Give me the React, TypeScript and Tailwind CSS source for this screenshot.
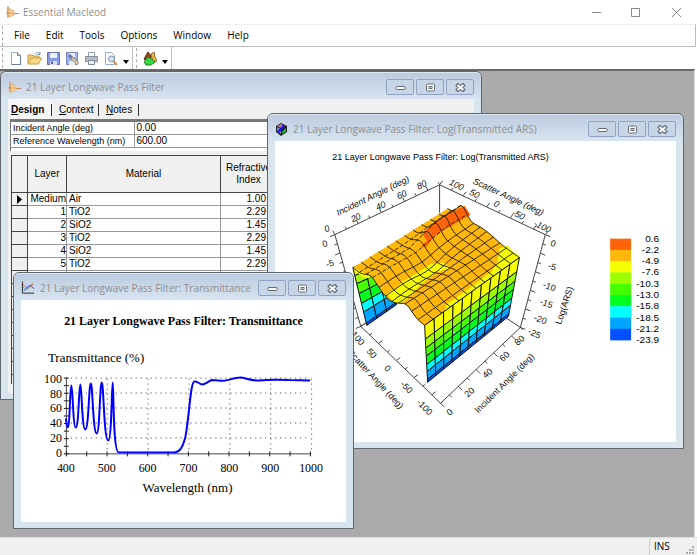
import { ReactNode } from "react";

type Point = [number, number];

const MENU = ["File", "Edit", "Tools", "Options", "Window", "Help"];

const LAYERS = [
  { layer: "Medium", material: "Air", index: "1.00" },
  ...Array.from({ length: 5 }, (_, i) => ({
    layer: String(i + 1),
    material: i % 2 === 0 ? "TiO2" : "SiO2",
    index: i % 2 === 0 ? "2.29" : "1.45",
  })),
  ...Array.from({ length: 9 }, () => ({ layer: "", material: "", index: "" })),
];

const BANDS = [
  "#ff640a",
  "#ffb70b",
  "#f6ff00",
  "#9dff00",
  "#46ff00",
  "#00ff1e",
  "#00ffff",
  "#00a5ff",
  "#0050ff",
];

const LEVELS = [
  "0.6",
  "-2.2",
  "-4.9",
  "-7.6",
  "-10.3",
  "-13.0",
  "-15.8",
  "-18.5",
  "-21.2",
  "-23.9",
];

const lerp = (a: Point, b: Point, t: number): Point => [
  a[0] + (b[0] - a[0]) * t,
  a[1] + (b[1] - a[1]) * t,
];

const toPoints = (points: Point[]) =>
  points.map((p) => `${p[0].toFixed(1)},${p[1].toFixed(1)}`).join(" ");

function AppIcon() {
  return (
    <svg className="shrink-0" width="13" height="14" viewBox="0 0 13 14" fill="none">
      <path d="M2 1.500v11" stroke="#d8a56e" strokeWidth="2" />
      <path d="M1 2l6 4M1 12l7-3" stroke="#e8b47c" />
      <path d="M3 4l5 2v4l-5 2z" fill="#ffd9a0" stroke="#e0ae78" />
      <path d="M8 8.500h5M0 8h3M4 8h3" stroke="#c98d55" />
    </svg>
  );
}

function CubeIcon() {
  return (
    <svg className="shrink-0" width="13" height="13" viewBox="0 0 13 13">
      <path d="M6 0l6 3v6l-6 4-5-4V3z" fill="#222" />
      <path d="M6 1l4 2-4 2-4-2z" fill="#b87aa0" />
      <path d="M2 4l4 2v5L2 8z" fill="#8a8a8a" />
      <path d="M3 9l3-3 3-4" stroke="#1010ff" strokeWidth="2" fill="none" />
      <path d="M7 9l4-4v3L8 11z" fill="#16d030" />
    </svg>
  );
}

function PlotIcon() {
  return (
    <svg className="shrink-0" width="14" height="14" viewBox="0 0 15 14" fill="none">
      <path d="M1.500 0v12.500H14" stroke="#222" />
      <path d="M2 3l3 3 3 1 5-4" stroke="#e02020" strokeDasharray="2 1" />
      <path d="M3 10l4-4 3-2 4 4" stroke="#3030ff" />
      <path d="M2 6l4 3 4-4 3-4" stroke="#20c840" strokeDasharray="2 1" />
    </svg>
  );
}

function MinGlyph() {
  return (
    <svg width="11" height="9" viewBox="0 0 11 9">
      <rect x="1" y="3.500" width="9" height="3" rx="1" fill="#fff" stroke="#676b78" />
    </svg>
  );
}

function MaxGlyph() {
  return (
    <svg width="11" height="9" viewBox="0 0 11 9">
      <rect x="1.500" y="1" width="8" height="7" rx="1" fill="#fff" stroke="#676b78" />
      <rect x="4" y="3.500" width="3" height="2" fill="#b8c9dd" stroke="#676b78" />
    </svg>
  );
}

function CloseGlyph() {
  return (
    <svg width="11" height="9" viewBox="0 0 11 9">
      <path d="M1.500 1l8 7M9.500 1l-8 7" stroke="#676b78" strokeWidth="4" />
      <path d="M2.500 2l6 5M8.500 2l-6 5" stroke="#fff" strokeWidth="2" />
    </svg>
  );
}

type WindowProps = {
  title: string;
  icon: ReactNode;
  className: string;
  children: ReactNode;
};

function ChildWindow({ title, icon, className, children }: WindowProps) {
  const buttons = [
    { label: "Minimize", glyph: <MinGlyph /> },
    { label: "Restore", glyph: <MaxGlyph /> },
    { label: "Close", glyph: <CloseGlyph /> },
  ];
  return (
    <section
      className={`absolute flex flex-col rounded-t-md border border-[#60666d] bg-[#d7e5ef] px-[7px] pb-[6px] ${className}`}
    >
      <header className="-mx-[7px] flex h-[27px] shrink-0 items-center rounded-t-md border-t border-[#dce8f4] bg-linear-to-b from-[#bccbdf] to-[#d7e5f1] pt-0.5 pr-[7px] pl-[7px]">
        {icon}
        <h2 className="ml-[5px] grow text-[10px] whitespace-nowrap text-[#8e8e8e]">
          {title}
        </h2>
        <div className="flex gap-0.5">
          {buttons.map((b) => (
            <button
              key={b.label}
              aria-label={b.label}
              className="flex h-4 w-7 items-center justify-center rounded-xs border border-[#91a2c4] bg-[#c6d6e7]"
            >
              {b.glyph}
            </button>
          ))}
        </div>
      </header>
      <div className="min-h-0 grow overflow-hidden">{children}</div>
    </section>
  );
}

function Tab({ label, className }: { label: string; className: string }) {
  return (
    <button
      role="tab"
      aria-selected={label === "Design"}
      className={`h-5 rounded-tl-sm rounded-tr-md border-t border-white text-left ${className}`}
    >
      <span className="flex items-center justify-between">
        <span>
          <u>{label[0]}</u>
          {label.slice(1)}
        </span>
        <span className="h-3 w-px bg-[#333]" />
      </span>
    </button>
  );
}

function DesignTable() {
  return (
    <div className="flex h-full flex-col bg-[#f0f0f0] font-['Liberation_Sans',sans-serif] text-[10px] leading-3 text-black">
      <div role="tablist" className="flex shrink-0 gap-1">
        <Tab label="Design" className="w-11 bg-[#f5f5f5] pl-[3px] font-bold" />
        <Tab label="Context" className="w-[43px] pl-[3px]" />
        <Tab label="Notes" className="w-9 pl-[3px]" />
      </div>
      <div className="ml-0.5 h-8 shrink-0 overflow-hidden border-t border-l border-[#777] bg-white">
        <table className="w-full table-fixed border-collapse border-t-2 border-[#777]">
          <tbody>
            <tr className="h-[13px] border-b border-[#999]">
              <th className="w-[123px] border-r border-[#999] p-0 pl-0.5 text-left text-[9px] font-normal whitespace-nowrap">
                Incident Angle (deg)
              </th>
              <td className="p-0 pl-0.5">0.00</td>
            </tr>
            <tr className="h-[13px] border-b border-[#999]">
              <th className="border-r border-[#999] p-0 pl-0.5 text-left text-[9px] font-normal whitespace-nowrap">
                Reference Wavelength (nm)
              </th>
              <td className="p-0 pl-0.5">600.00</td>
            </tr>
          </tbody>
        </table>
      </div>
      <div className="mt-1 mb-2 ml-[3px] min-h-0 grow overflow-hidden border-b border-white">
        <table className="w-full table-fixed border-collapse border border-[#444] bg-white">
          <thead>
            <tr className="h-[37px] bg-[#f0f0f0]">
              <th className="w-4 border border-[#444]" />
              <th className="w-[39px] border border-[#444] font-normal">Layer</th>
              <th className="w-[154px] border border-[#444] font-normal">Material</th>
              <th className="w-14 border border-[#444] font-normal">
                Refractive Index
              </th>
              <th className="border border-[#444]" />
            </tr>
          </thead>
          <tbody>
            {LAYERS.map((row, i) => (
              <tr key={i} className="h-[13px] border-b border-[#999]">
                <td className="border border-[#444] bg-[#f0f0f0] p-0">
                  {i === 0 && (
                    <svg className="mx-auto" width="5" height="9" viewBox="0 0 5 9">
                      <path d="M0 0l5 4.500L0 9z" />
                    </svg>
                  )}
                </td>
                <td className="border-r border-[#999] p-0 text-right">{row.layer}</td>
                <td className="border-r border-[#999] py-0 pl-0.5">{row.material}</td>
                <td className="border-r border-[#999] py-0 pr-2.5 text-right">
                  {row.index}
                </td>
                <td />
              </tr>
            ))}
          </tbody>
        </table>
      </div>
    </div>
  );
}

// Height offset of the scatter surface, u runs along incident angle and v along scatter angle.
function lift(u: number, v: number) {
  const hump = (c: number, w: number) => Math.exp(-((v - c) ** 2) / w);
  const near = 1 - u;
  return (
    near * (6 * hump(0.25, 0.01) - 3 * hump(0.5, 0.01) + 6 * hump(0.75, 0.01)) +
    12 * hump(0.2, 0.008) * Math.max(0, Math.min(1, (u - 0.45) * 3)) +
    u * 4 * hump(0.5, 0.05) -
    5 * hump(0.45, 0.02) * Math.exp(-((u - 0.45) ** 2) / 0.03)
  );
}

const LEFT: Point = [353, 267];
const BACK: Point = [448, 208];
const FRONT: Point = [425, 325];
const RIGHT: Point = [520, 257];

function surface(u: number, v: number): Point {
  const [x, y] = lerp(lerp(LEFT, BACK, u), lerp(FRONT, RIGHT, u), v);
  return [x, y - lift(u, v)];
}

function Wall(props: {
  top: [Point, Point];
  bottom: [Point, Point];
  columns: number;
  stops: number[];
}) {
  const { top, bottom, columns, stops } = props;
  const colors = BANDS.slice(2);
  const at = (c: number, s: number) =>
    lerp(lerp(top[0], top[1], c / columns), lerp(bottom[0], bottom[1], c / columns), s);
  return (
    <g stroke="#111" strokeWidth="1">
      {Array.from({ length: columns }, (_, c) =>
        colors.map((color, i) => (
          <polygon
            key={`${c}-${i}`}
            fill={color}
            points={toPoints([
              at(c, stops[i]),
              at(c + 1, stops[i]),
              at(c + 1, stops[i + 1]),
              at(c, stops[i + 1]),
            ])}
          />
        ))
      )}
    </g>
  );
}

function Axis(props: { from: Point; to: Point; tick: Point; count: number }) {
  const { from, to, tick, count } = props;
  return (
    <g stroke="#444">
      <line x1={from[0]} y1={from[1]} x2={to[0]} y2={to[1]} />
      {Array.from({ length: count + 1 }, (_, i) => {
        const [x, y] = lerp(from, to, i / count);
        const k = i % 2 === 0 ? 1 : 0.6;
        return <line key={i} x1={x} y1={y} x2={x + tick[0] * k} y2={y + tick[1] * k} />;
      })}
    </g>
  );
}

const AXIS_LABELS: [string, number, number, number][] = [
  ["Incident Angle (deg)", 373, 195, -26],
  ["80", 422, 184, -26],
  ["60", 402, 194, -26],
  ["40", 381, 205, -26],
  ["20", 356, 217, -26],
  ["0", 327, 228, -26],
  ["0", 325, 243, -15],
  ["-5", 330, 263, -15],
  ["Scatter Angle (deg)", 509, 196, 25],
  ["100", 457, 184, 25],
  ["50", 475, 193, 25],
  ["0", 497, 203, 25],
  ["-50", 519, 214, 25],
  ["-100", 543, 226, 25],
  ["0", 554, 243, 15],
  ["-5", 553, 266, 20],
  ["-10", 550, 286, 20],
  ["-15", 547, 303, 20],
  ["-20", 541, 319, 20],
  ["-25", 535, 333, 25],
  ["Log(ARS)", 565, 305, -72],
  ["100", 358, 338, 48],
  ["50", 372, 353, 48],
  ["0", 388, 368, 45],
  ["-50", 407, 387, 45],
  ["-100", 425, 407, 45],
  ["Scatter Angle (deg)", 376, 379, 47],
  ["0", 450, 412, -42],
  ["20", 470, 392, -42],
  ["40", 488, 373, -42],
  ["60", 505, 356, -42],
  ["80", 520, 340, -42],
  ["Incident Angle (deg)", 505, 383, -45],
];

const STEPS = Array.from({ length: 12 }, (_, i) => i);
const FINE = Array.from({ length: 41 }, (_, i) => i / 40);

function SurfacePlot() {
  const outline = [
    ...FINE.map((t) => surface(t, 0)),
    ...FINE.map((t) => surface(1, t)),
    ...FINE.map((t) => surface(1 - t, 1)),
    ...FINE.map((t) => surface(0, 1 - t)),
  ];
  return (
    <svg
      className="h-full w-full bg-white font-['Liberation_Sans',sans-serif]"
      viewBox="275 141 402 300"
      role="img"
      aria-label="Log(Transmitted ARS) surface"
    >
      <text x="441" y="159" fontSize="9" textAnchor="middle">
        21 Layer Longwave Pass Filter: Log(Transmitted ARS)
      </text>
      <line x1="440" y1="184" x2="440" y2="212" stroke="#444" />
      <Axis from={[335, 234]} to={[440, 184]} tick={[-2, -4]} count={9} />
      <Axis from={[440, 184]} to={[546, 234]} tick={[3, -4]} count={9} />
      <Axis from={[335, 234]} to={[361, 326]} tick={[-5, 2]} count={10} />
      <Axis from={[546, 234]} to={[521, 327]} tick={[5, 2]} count={10} />
      <Axis from={[361, 326]} to={[441, 403]} tick={[4, -3]} count={9} />
      <Axis from={[441, 403]} to={[521, 327]} tick={[4, 4]} count={9} />
      <path d="M361 326l8-5M521 327l-15-10" stroke="#444" />
      <Wall
        top={[[353, 267], [387, 254]]}
        bottom={[[367, 325], [397, 304]]}
        columns={3}
        stops={[0, 0.14, 0.28, 0.45, 0.62, 0.77, 0.96, 1]}
      />
      <polygon points={toPoints(outline)} fill="#ffb70b" />
      <g fill="#f6ff00">
        <polygon points="387,293 399,286 403,281 417,273 430,264 443,262 451,267 437,272 420,285 408,298 401,303 394,302" />
        <polygon points="500,248 508,245 515,252 520,255 520,263 496,278 445,311 447,304 478,282 492,271 498,262" />
        <polygon points="353,267 362,271 372,278 363,277" />
      </g>
      <polygon
        points="421,246 427,240 423,233 437,220 452,211 465,205 471,214 457,222 435,235 427,246"
        fill="#ff640a"
      />
      <g fill="none" stroke="#2a2206" strokeWidth="1">
        {STEPS.map((i) => (
          <polyline key={`u${i}`} points={toPoints(FINE.map((t) => surface(i / 11, t)))} />
        ))}
        {STEPS.slice(1).map((i) => (
          <polyline
            key={`v${i}`}
            strokeDasharray={i < 4 ? "4 2" : undefined}
            points={toPoints(FINE.map((t) => surface(t, i / 11)))}
          />
        ))}
      </g>
      <Wall
        top={[[425, 325], [520, 257]]}
        bottom={[[428, 382], [509, 316]]}
        columns={10}
        stops={[0, 0.24, 0.4, 0.54, 0.69, 0.81, 0.95, 1]}
      />
      <g textAnchor="middle" fill="#111" fontSize="9">
        {AXIS_LABELS.map(([text, x, y, angle]) => (
          <text
            key={`${x}-${y}`}
            fontStyle={y < 240 ? "italic" : undefined}
            transform={`translate(${x} ${y}) rotate(${angle})`}
            y="3"
          >
            {text}
          </text>
        ))}
      </g>
      {BANDS.map((color, i) => (
        <rect key={color} x="611" y={238 + i * 11.3} width="21" height="11.6" fill={color} />
      ))}
      <g fontSize="10" textAnchor="end">
        {LEVELS.map((level, i) => (
          <text key={level} x="660" y={241 + i * 11.3}>
            {level}
          </text>
        ))}
      </g>
    </svg>
  );
}

const CURVE =
  "M66 418C67 424 67 427 68 427C70 427 70 385 71.500 385C73 385 73 427 76 427C79 427 79 384 80.500 384C82 384 82 429 85.500 429C89 429 89 383 91 383C93 383 93 433 97 433C100 433 100 382 102 382C104 382 104 440 108.500 440C112 440 112 382 113 382C114 382 113 452 119 452L174 452C180 452 183 448 186 436C190 414 191 381 195 381C198 380 200 384 203 384C206 384 209 380 213 379.500C219 379.500 223 381 228 379.500C234 378 237 377 241 377C246 377 250 380 260 380C268 379 280 379 290 379.500L311 380";

function TransmittancePlot() {
  return (
    <svg
      className="h-full w-full bg-white font-['Liberation_Serif',serif]"
      viewBox="21 300 326 221"
      role="img"
      aria-label="Transmittance against wavelength"
    >
      <text x="184" y="324" fontSize="12" fontWeight="bold" textAnchor="middle">
        21 Layer Longwave Pass Filter: Transmittance
      </text>
      <text x="48" y="361" fontSize="13">
        Transmittance (%)
      </text>
      <g stroke="#333" strokeDasharray="1 4">
        {[0, 1, 2, 3, 4].map((i) => (
          <line key={i} x1="66" x2="311" y1={377.5 + i * 15} y2={377.5 + i * 15} />
        ))}
        {[1, 2, 3, 4, 5, 6].map((i) => (
          <line key={i} x1={66.5 + i * 41} x2={66.5 + i * 41} y1="378" y2="453" />
        ))}
      </g>
      <path d="M66.500 377v76M66 453.500h246" stroke="#444" />
      <g stroke="#222">
        {Array.from({ length: 11 }, (_, i) => (
          <line key={i} x1="64" x2="69" y1={377.5 + i * 7.6} y2={377.5 + i * 7.6} />
        ))}
        {Array.from({ length: 13 }, (_, i) => (
          <line key={i} x1={66.5 + i * 20.4} x2={66.5 + i * 20.4} y1="451" y2="456" />
        ))}
      </g>
      <g fontSize="12" textAnchor="end">
        {[100, 80, 60, 40, 20, 0].map((n, i) => (
          <text key={n} x="62" y={382 + i * 15}>
            {n}
          </text>
        ))}
      </g>
      <g fontSize="12" textAnchor="middle">
        {[400, 500, 600, 700, 800, 900, 1000].map((n, i) => (
          <text key={n} x={66 + i * 41} y="472">
            {n}
          </text>
        ))}
      </g>
      <text x="188" y="492" fontSize="13" textAnchor="middle">
        Wavelength (nm)
      </text>
      <path d={CURVE} fill="none" stroke="#0000ff" strokeWidth="2" />
    </svg>
  );
}

function ToolButton({ label, children }: { label: string; children: ReactNode }) {
  return (
    <button aria-label={label} className="flex w-[19px] justify-center">
      <svg width="15" height="15" viewBox="0 0 15 15" fill="none">
        {children}
      </svg>
    </button>
  );
}

function DropArrow({ label }: { label: string }) {
  return (
    <button aria-label={label} className="flex h-4 w-3 items-end justify-center pb-0.5">
      <svg width="6" height="4" viewBox="0 0 6 4">
        <path d="M0 0h6L3 4z" />
      </svg>
    </button>
  );
}

function Grip() {
  return <span className="h-5 border-l border-dashed border-[#aaa]" />;
}

function Toolbar() {
  return (
    <div className="flex h-[22px] shrink-0 items-center bg-white">
      <div className="flex h-full items-center border-r border-[#bbb] pl-0.5">
        <Grip />
        <span className="w-[3px]" />
        <ToolButton label="New">
          <path d="M3.500 1.500h6l3 3v9h-9z" fill="#fff" stroke="#9aaccc" />
          <path d="M9.500 1.500v3h3M12.500 5v8.500h-9" stroke="#6a7f9f" />
        </ToolButton>
        <ToolButton label="Open">
          <path d="M1 12V4h4l1 1h6v2" fill="#f5cf74" stroke="#c99b45" />
          <path d="M1 13l3-6h10.500l-3 6z" fill="#fbd98a" stroke="#c99b45" />
          <path d="M8 3c2-2 4-2 5 0m0-2v2.500h-2.500" stroke="#6b91b5" />
        </ToolButton>
        <ToolButton label="Save">
          <path d="M1.500 1.500h12v12h-12z" fill="#8797e0" stroke="#6272bd" />
          <path d="M4 2h7v5H4z" fill="#eef2ff" />
          <path d="M4 10h7v4H4z" fill="#d7dcf0" />
          <path d="M5 10.500h2V13H5z" fill="#5566aa" />
        </ToolButton>
        <ToolButton label="Save as">
          <path d="M1.500 1.500h11v12h-11z" fill="#a3afe6" stroke="#7684c6" />
          <path d="M4 2h6v4H4zM4 10h6v4H4z" fill="#e8ecff" />
          <path d="M4 4l9 9" stroke="#6a789c" strokeWidth="3" />
          <path d="M7 7l6 6" stroke="#f2c47a" strokeWidth="2" />
        </ToolButton>
        <ToolButton label="Print">
          <path d="M4.500 1.500h6v5h-6z" fill="#fff" stroke="#8d9ab0" />
          <path d="M1.500 5.500h12v5h-12z" fill="#b5bcc6" stroke="#858e9b" />
          <path d="M4.500 9.500h6v4h-6z" fill="#eef3fb" stroke="#808a99" />
        </ToolButton>
        <ToolButton label="Print preview">
          <path d="M2.500 1.500h6l3 3v9h-9z" fill="#fff" stroke="#9aaccc" />
          <circle cx="8.500" cy="8" r="3" fill="#cfe6f7" stroke="#7e93ab" />
          <path d="M10.500 10l3.500 4" stroke="#c99252" strokeWidth="2" />
        </ToolButton>
        <DropArrow label="Print preview options" />
      </div>
      <div className="flex h-full items-center border-r border-[#bbb] pl-[3px]">
        <Grip />
        <span className="w-[3px]" />
        <ToolButton label="Plot">
          <path d="M2 8l4-7 3 4-3 7z" fill="#a63b18" stroke="#5b2a15" />
          <path d="M9 3l3-2 1 5 2 4-4 2z" fill="#e5b84b" stroke="#8c6a24" />
          <path d="M2 11l4-5 4 2 3 3-4 3H4z" fill="#32d83e" stroke="#2f7c2c" />
        </ToolButton>
        <DropArrow label="Plot options" />
      </div>
    </div>
  );
}

function App() {
  return (
    <div className="flex h-screen flex-col overflow-hidden bg-white font-['Open_Sans',sans-serif]">
      <header className="flex h-6 shrink-0 items-center pl-1.5">
        <AppIcon />
        <h1 className="ml-1 grow text-[10px] text-[#8e8e8e]">Essential Macleod</h1>
        <div className="flex">
          <button aria-label="Minimize" className="flex w-[39px] justify-center">
            <svg width="9" height="9" stroke="#888">
              <path d="M0 4.500h9" />
            </svg>
          </button>
          <button aria-label="Maximize" className="flex w-[39px] justify-center">
            <svg width="9" height="9" stroke="#888" fill="none">
              <path d="M.5.5h8v8h-8z" />
            </svg>
          </button>
          <button aria-label="Close" className="flex w-[42px] justify-center">
            <svg width="9" height="9" stroke="#888">
              <path d="M0 0l9 9M9 0L0 9" />
            </svg>
          </button>
        </div>
      </header>
      <nav className="mr-px flex h-[23px] shrink-0 items-center border-t border-r border-b border-t-[#eee] border-r-[#bbb] border-b-[#bbb] pl-0.5 text-[10px] text-black">
        <Grip />
        <span className="w-[3px]" />
        {MENU.map((item) => (
          <button key={item} className="px-2">
            {item}
          </button>
        ))}
      </nav>
      <Toolbar />
      <main className="relative mr-0.5 min-h-0 grow overflow-hidden border-t-2 border-r border-[#696969] border-r-[#ddd] bg-[#ababab]">
        <ChildWindow
          title="21 Layer Longwave Pass Filter"
          icon={<AppIcon />}
          className="top-0 left-0 h-[329px] w-[482px]"
        >
          <DesignTable />
        </ChildWindow>
        <ChildWindow
          title="21 Layer Longwave Pass Filter: Log(Transmitted ARS)"
          icon={<CubeIcon />}
          className="top-[42px] left-[267px] h-[336px] w-[417px]"
        >
          <SurfacePlot />
        </ChildWindow>
        <ChildWindow
          title="21 Layer Longwave Pass Filter: Transmittance"
          icon={<PlotIcon />}
          className="top-[201px] left-[13px] h-[257px] w-[341px]"
        >
          <TransmittancePlot />
        </ChildWindow>
      </main>
      <footer className="flex h-[18px] shrink-0 items-center justify-end border-t border-[#ddd] bg-[#f0f0f0] text-[10px] text-black">
        <span className="h-4 w-[37px] border-l border-[#ccc] pl-1">INS</span>
        <svg className="self-end" width="11" height="10" fill="#aaa">
          <path d="M6 1h2v2H6zM6 4h2v2H6zM3 4h2v2H3zM6 7h2v2H6zM3 7h2v2H3zM0 7h2v2H0z" />
        </svg>
      </footer>
    </div>
  );
}

export default App;
